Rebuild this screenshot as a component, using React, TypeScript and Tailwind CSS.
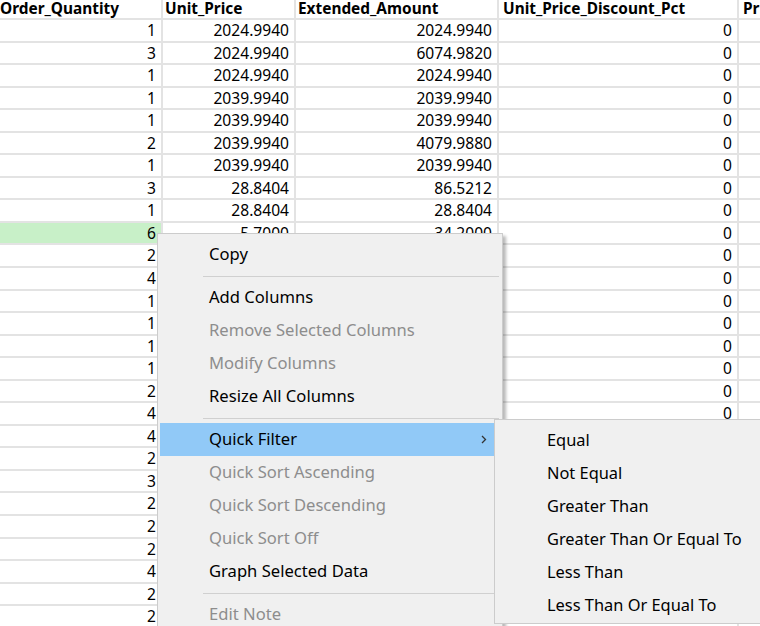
import React from "react";

const rows: [string, string, string, string][] = [
  ["1", "2024.9940", "2024.9940", "0"],
  ["3", "2024.9940", "6074.9820", "0"],
  ["1", "2024.9940", "2024.9940", "0"],
  ["1", "2039.9940", "2039.9940", "0"],
  ["1", "2039.9940", "2039.9940", "0"],
  ["2", "2039.9940", "4079.9880", "0"],
  ["1", "2039.9940", "2039.9940", "0"],
  ["3", "28.8404", "86.5212", "0"],
  ["1", "28.8404", "28.8404", "0"],
  ["6", "5.7000", "34.2000", "0"],
  ["2", "5.7000", "11.4000", "0"],
  ["4", "28.8404", "115.3616", "0"],
  ["1", "2039.9940", "2039.9940", "0"],
  ["1", "2024.9940", "2024.9940", "0"],
  ["1", "5.7000", "5.7000", "0"],
  ["1", "28.8404", "28.8404", "0"],
  ["2", "5.7000", "11.4000", "0"],
  ["4", "2039.9940", "8159.9760", "0"],
  ["4", "28.8404", "115.3616", "0"],
  ["2", "5.7000", "11.4000", "0"],
  ["3", "28.8404", "86.5212", "0"],
  ["2", "2024.9940", "4049.9880", "0"],
  ["2", "5.7000", "11.4000", "0"],
  ["2", "28.8404", "57.6808", "0"],
  ["4", "5.7000", "22.8000", "0"],
  ["2", "2039.9940", "4079.9880", "0"],
  ["2", "28.8404", "57.6808", "0"],
];

const font = { fontFamily: '"Noto Sans", "Open Sans", sans-serif' };

function Chevron() {
  return (
    <svg width="6" height="9" viewBox="0 0 6 9" className="block">
      <path d="M1 1 L4.5 4.5 L1 8" fill="none" stroke="#333" strokeWidth="1.3" />
    </svg>
  );
}

type Item = { label: string; disabled?: boolean; active?: boolean; sub?: boolean } | "sep10" | "sep11";

const menu: Item[] = [
  { label: "Copy" },
  "sep10",
  { label: "Add Columns" },
  { label: "Remove Selected Columns", disabled: true },
  { label: "Modify Columns", disabled: true },
  { label: "Resize All Columns" },
  "sep11",
  { label: "Quick Filter", active: true, sub: true },
  { label: "Quick Sort Ascending", disabled: true },
  { label: "Quick Sort Descending", disabled: true },
  { label: "Quick Sort Off", disabled: true },
  { label: "Graph Selected Data" },
  "sep10",
  { label: "Edit Note", disabled: true },
];

const submenu = [
  "Equal",
  "Not Equal",
  "Greater Than",
  "Greater Than Or Equal To",
  "Less Than",
  "Less Than Or Equal To",
];

export default function App() {
  return (
    <div className="relative h-[626px] w-[760px] overflow-hidden bg-white text-black" style={font}>
      {/* header */}
      <div className="flex h-[20px] border-b-2 border-[#e3e3e3] text-[15.4px] font-bold leading-[18px]">
        <div className="w-[163px] shrink-0 border-r-2 border-[#e3e3e3] pl-0 whitespace-nowrap">Order_Quantity</div>
        <div className="w-[133px] shrink-0 border-r-2 border-[#e3e3e3] pl-[2px] whitespace-nowrap">Unit_Price</div>
        <div className="w-[203px] shrink-0 border-r-2 border-[#e3e3e3] pl-[2px] whitespace-nowrap">Extended_Amount</div>
        <div className="w-[240px] shrink-0 border-r-2 border-[#e3e3e3] pl-[4px] whitespace-nowrap">Unit_Price_Discount_Pct</div>
        <div className="flex-1 pl-[4px] whitespace-nowrap">Pr</div>
      </div>
      {/* rows */}
      {rows.map((r, i) => (
        <div key={i} className="flex h-[22.55px] border-b-2 border-[#e3e3e3] text-[15.6px] leading-[20px]">
          <div className={`w-[163px] shrink-0 border-r-2 border-[#e3e3e3] pr-[5px] text-right ${i === 9 ? "bg-[#c8f0c8]" : ""}`}>{r[0]}</div>
          <div className="w-[133px] shrink-0 border-r-2 border-[#e3e3e3] pr-[5px] text-right">{r[1]}</div>
          <div className="w-[203px] shrink-0 border-r-2 border-[#e3e3e3] pr-[5px] text-right">{r[2]}</div>
          <div className="w-[240px] shrink-0 border-r-2 border-[#e3e3e3] pr-[5px] text-right">{r[3]}</div>
          <div className="flex-1"></div>
        </div>
      ))}

      {/* context menu */}
      <div className="absolute left-[157px] top-[233px] w-[346px] border border-[#cccccc] bg-[#f0f0f0] px-[2px] pt-[4px] shadow-[3px_3px_3px_rgba(0,0,0,0.28)]">
        {menu.map((m, i) => {
          if (m === "sep10" || m === "sep11") {
            return (
              <div key={i} className={`flex items-center ${m === "sep10" ? "h-[10px]" : "h-[10px]"}`}>
                <div className="ml-[43px] mr-[1px] h-px flex-1 bg-[#d0d0d0]" />
              </div>
            );
          }
          return (
            <div
              key={i}
              className={`flex h-[33px] items-center justify-between pl-[49px] pr-[10px] text-[16.6px] ${
                m.active ? "bg-[#91c9f7]" : ""
              } ${m.disabled ? "text-[#8d8d8d]" : "text-black"}`}
            >
              <span className="whitespace-nowrap">{m.label}</span>
              {m.sub && (
                <span className="block translate-x-[-3px]">
                  <Chevron />
                </span>
              )}
            </div>
          );
        })}
      </div>

      {/* submenu */}
      <div className="absolute left-[494px] top-[419px] w-[290px] border border-[#cccccc] bg-[#f0f0f0] pt-[4px] pb-[1px]">
        {submenu.map((s) => (
          <div key={s} className="flex h-[33px] items-center pl-[52px] text-[16.4px] text-black whitespace-nowrap">
            {s}
          </div>
        ))}
      </div>
    </div>
  );
}
